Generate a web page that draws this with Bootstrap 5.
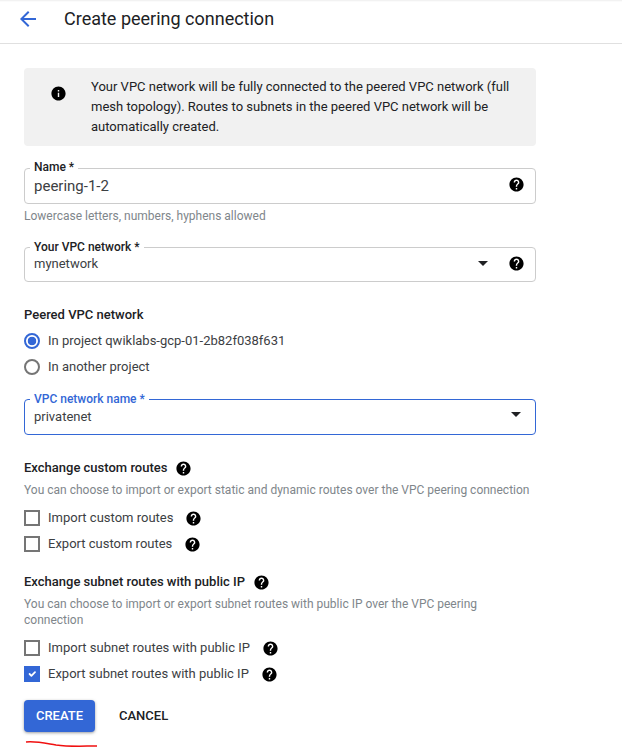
<!DOCTYPE html>
<html lang="en">
<head>
  <meta charset="UTF-8">
  <meta name="viewport" content="width=device-width, initial-scale=1.0">
  <title>Create peering connection</title>
  <link href="https://cdn.jsdelivr.net/npm/bootstrap@5.3.0/dist/css/bootstrap.min.css" rel="stylesheet">
  <style>
    body {
      font-family: Roboto, "Liberation Sans", sans-serif;
      font-size: 13px;
      line-height: 20px;
      color: #202124;
      background: #fff;
    }
    .page-head {
      height: 44px;
      border-bottom: 1px solid #e0e0e0;
      box-shadow: inset 0 3px 2px -2px #eee;
      padding: 0 0 6px 16px;
    }
    .page-title { font-size: 18px; font-weight: 400; line-height: 24px; margin: 0 0 0 24px; color: #202124; }
    .peer-form { width: 512px; margin-left: 24px; }
    .info-box {
      margin-top: 24px;
      height: 78px;
      background: #f1f1f1;
      border-radius: 4px;
      padding: 9px 20px 0 26px;
    }
    .info-box p { margin: 0 0 0 24px; }
    .info-icon { margin-top: 8px; }
    .outlined {
      position: relative;
      border: 1px solid #ccc;
      border-radius: 4px;
      padding: 0 9px;
      color: #3c4043;
    }
    .outlined.is-focus { border-color: #3367d6; }
    .outlined label {
      position: absolute;
      top: -10px;
      left: 5px;
      padding: 0 4px;
      background: #fff;
      font-size: 12px;
      font-weight: 500;
      line-height: 18px;
      color: #202124;
    }
    .outlined.is-focus label { color: #3367d6; }
    .field-name { height: 36px; margin-top: 22px; padding-top: 7px; }
    .field-name label { top: -11px; }
    .field-name .field-text { font-size: 15px; line-height: 22px; margin-top: -1px; }
    .field-name .q-icon { height: 17px; margin-right: 1px; }
    .field-vpc { height: 35px; margin-top: 23px; padding-top: 2px; }
    .field-peer { height: 36px; margin-top: 19px; padding-top: 3px; }
    .field-text { line-height: 20px; margin-top: 4px; }
    .field-end { margin-right: 1px; gap: 20px; height: 27px; }
    .field-peer .field-end { margin-right: 5px; height: 22px; }
    .down-caret {
      width: 0;
      height: 0;
      border-left: 5px solid transparent;
      border-right: 5px solid transparent;
      border-top: 5px solid #202124;
    }
    .hint { font-size: 12px; line-height: 16px; color: #80868b; margin-top: 4px; }
    .hint-name { margin-top: 4px; }
    .group-title { font-weight: 500; color: #202124; margin: 0; }
    .gap-peered { margin-top: 23px; }
    .gap-custom { margin-top: 23px; }
    .gap-subnet { margin-top: 15px; }
    .radio-list { margin-top: 3px; }
    .check-list { margin-top: 7px; }
    .opt-row { height: 26px; }
    .opt-row .form-check-input {
      width: 16px;
      height: 16px;
      margin: 0 8px 0 0;
      border: 2px solid #757575;
      background-color: #fff;
      flex: none;
    }
    .opt-row .form-check-input:checked { border-color: #3367d6; background-color: #3367d6; }
    .opt-row input[type=radio]:checked {
      background-color: #fff;
      background-image: radial-gradient(circle, #3367d6 0, #3367d6 4px, transparent 4.6px);
    }
    .opt-row label { color: #3c4043; }
    .q-icon { flex: none; display: block; }
    .opt-row .q-icon { margin-left: 12px; }
    .group-title .q-icon { margin-left: 7.5px; }
    .form-actions { margin-top: 13px; }
    .btn-create {
      --bs-btn-bg: #3367d6;
      --bs-btn-hover-bg: #2f5fc5;
      --bs-btn-color: #fff;
      --bs-btn-hover-color: #fff;
      width: 71px;
      height: 32px;
      padding: 0;
      border: 0;
      border-radius: 4px;
      font-size: 13px;
      font-weight: 500;
      box-shadow: 0 1px 3px rgba(60, 64, 67, .5);
    }
    .btn-cancel {
      --bs-btn-color: #202124;
      border: 0;
      padding: 0;
      margin-left: 24px;
      font-size: 13px;
      font-weight: 500;
    }
    .red-mark { display: block; margin-top: 8px; }
  </style>
</head>
<body>
  <svg width="0" height="0" class="position-absolute">
    <symbol id="q" viewBox="0 0 24 24">
      <path d="M12 2C6.48 2 2 6.48 2 12s4.48 10 10 10 10-4.48 10-10S17.52 2 12 2zm1 17h-2v-2h2v2zm2.07-7.75l-.9.92C13.45 12.9 13 13.5 13 15h-2v-.5c0-1.1.45-2.1 1.17-2.83l1.24-1.26c.37-.36.59-.86.59-1.41 0-1.1-.9-2-2-2s-2 .9-2 2H8c0-2.21 1.79-4 4-4s4 1.79 4 4c0 .88-.36 1.68-.93 2.25z"/>
    </symbol>
  </svg>

  <div class="page-head d-flex align-items-center">
    <svg width="24" height="24" viewBox="0 0 24 24" fill="#3367d6"><path d="M20 11H7.83l5.59-5.59L12 4l-8 8 8 8 1.41-1.41L7.83 13H20v-2z"/></svg>
    <h1 class="page-title">Create peering connection</h1>
  </div>

  <form class="peer-form">
    <div class="info-box d-flex align-items-start">
      <svg class="info-icon flex-shrink-0" width="17" height="17" viewBox="0 0 24 24"><path d="M12 2C6.48 2 2 6.48 2 12s4.48 10 10 10 10-4.48 10-10S17.52 2 12 2zm1 15h-2v-6h2v6zm0-8h-2V7h2v2z"/></svg>
      <p>Your VPC network will be fully connected to the peered VPC network (full mesh topology). Routes to subnets in the peered VPC network will be automatically created.</p>
    </div>

    <div class="outlined field-name d-flex justify-content-between align-items-start">
      <label>Name *</label>
      <span class="field-text">peering-1-2</span>
      <svg class="q-icon" width="17" height="17" viewBox="0 0 24 24"><use href="#q"/></svg>
    </div>
    <div class="hint hint-name">Lowercase letters, numbers, hyphens allowed</div>

    <div class="outlined field-vpc d-flex justify-content-between align-items-start">
      <label>Your VPC network *</label>
      <span class="field-text">mynetwork</span>
      <div class="field-end d-flex align-items-center">
        <span class="down-caret"></span>
        <svg class="q-icon" width="17" height="17" viewBox="0 0 24 24"><use href="#q"/></svg>
      </div>
    </div>

    <p class="group-title gap-peered">Peered VPC network</p>
    <div class="radio-list">
      <div class="opt-row d-flex align-items-center">
        <input class="form-check-input" type="radio" name="peer" id="peerSame" checked>
        <label for="peerSame">In project qwiklabs-gcp-01-2b82f038f631</label>
      </div>
      <div class="opt-row d-flex align-items-center">
        <input class="form-check-input" type="radio" name="peer" id="peerOther">
        <label for="peerOther">In another project</label>
      </div>
    </div>

    <div class="outlined is-focus field-peer d-flex justify-content-between align-items-start">
      <label>VPC network name *</label>
      <span class="field-text">privatenet</span>
      <div class="field-end d-flex align-items-center">
        <span class="down-caret"></span>
      </div>
    </div>

    <p class="group-title gap-custom d-flex align-items-center">Exchange custom routes
      <svg class="q-icon" width="17" height="17" viewBox="0 0 24 24"><use href="#q"/></svg>
    </p>
    <div class="hint">You can choose to import or export static and dynamic routes over the VPC peering connection</div>
    <div class="check-list">
      <div class="opt-row d-flex align-items-center">
        <input class="form-check-input rounded-0" type="checkbox" id="importCustom">
        <label for="importCustom">Import custom routes</label>
        <svg class="q-icon" width="17" height="17" viewBox="0 0 24 24"><use href="#q"/></svg>
      </div>
      <div class="opt-row d-flex align-items-center">
        <input class="form-check-input rounded-0" type="checkbox" id="exportCustom">
        <label for="exportCustom">Export custom routes</label>
        <svg class="q-icon" width="17" height="17" viewBox="0 0 24 24"><use href="#q"/></svg>
      </div>
    </div>

    <p class="group-title gap-subnet d-flex align-items-center">Exchange subnet routes with public IP
      <svg class="q-icon" width="17" height="17" viewBox="0 0 24 24"><use href="#q"/></svg>
    </p>
    <div class="hint">You can choose to import or export subnet routes with public IP over the VPC peering connection</div>
    <div class="check-list">
      <div class="opt-row d-flex align-items-center">
        <input class="form-check-input rounded-0" type="checkbox" id="importSubnet">
        <label for="importSubnet">Import subnet routes with public IP</label>
        <svg class="q-icon" width="17" height="17" viewBox="0 0 24 24"><use href="#q"/></svg>
      </div>
      <div class="opt-row d-flex align-items-center">
        <input class="form-check-input rounded-0" type="checkbox" id="exportSubnet" checked>
        <label for="exportSubnet">Export subnet routes with public IP</label>
        <svg class="q-icon" width="17" height="17" viewBox="0 0 24 24"><use href="#q"/></svg>
      </div>
    </div>

    <div class="form-actions d-flex align-items-center">
      <button type="button" class="btn btn-create">CREATE</button>
      <button type="button" class="btn btn-cancel">CANCEL</button>
    </div>
    <svg class="red-mark" width="76" height="8" viewBox="0 0 76 8"><path d="M2 2 C12 1 20 3 32 5 C46 7 60 6 73 6" fill="none" stroke="#f01010" stroke-width="1.5"/></svg>
  </form>
</body>
</html>
